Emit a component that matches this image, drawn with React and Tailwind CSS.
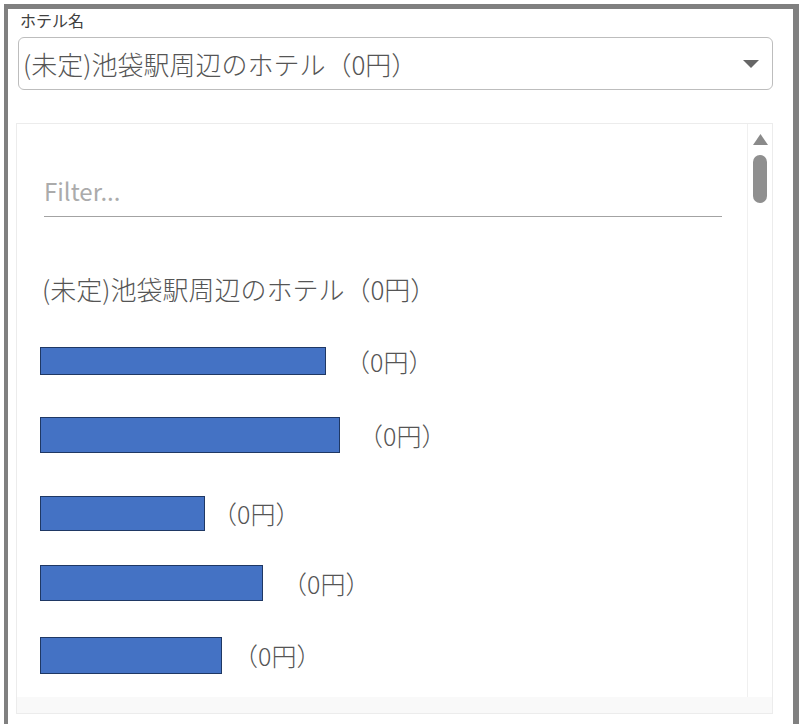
const HOTEL = '(未定)池袋駅周辺のホテル（0円）'

// redacted rows: bar width/height, gap before the price, row height
const ROWS = [
  { bar: 'w-[286px] h-[28px]', gap: 'ml-[19px]', row: 'h-[72px]' },
  { bar: 'w-[300px] h-[36px]', gap: 'ml-[18px]', row: 'h-[76px]' },
  { bar: 'w-[165px] h-[35px]', gap: 'ml-[7px]', row: 'h-[80px]' },
  { bar: 'w-[223px] h-[36px]', gap: 'ml-[19px]', row: 'h-[60px]' },
  { bar: 'w-[182px] h-[37px]', gap: 'ml-[11px]', row: 'h-[84px]' },
]

function SelectBox() {
  return (
    <div className="ml-[10px] mt-[6px] w-[755px] h-[53px] border border-[#bdbdbd] rounded-[6px] flex items-center justify-between pl-[4px] pr-[13px]">
      <span className="text-[26px] leading-none font-light text-[#555555]">{HOTEL}</span>
      <svg width="16" height="8" viewBox="0 0 16 8">
        <path d="M0 0 H16 L8 8 Z" fill="#666666" />
      </svg>
    </div>
  )
}

function Scrollbar() {
  return (
    <div className="w-[25px] border-l border-[#f0f0f0] flex flex-col items-center pt-[10px]">
      <svg width="15" height="11" viewBox="0 0 15 11">
        <path d="M7.5 0 L15 11 H0 Z" fill="#8a8a8a" />
      </svg>
      <div className="mt-[10px] w-[14px] h-[48px] rounded-full bg-[#8f8f8f]" />
    </div>
  )
}

function ListBox() {
  return (
    <div className="ml-[8px] mt-[33px] w-[757px] h-[591px] border border-[#ececec] flex flex-col">
      <div className="flex flex-1">
        <div className="flex-1 pt-[55px]">
          <div className="ml-[27px] w-[678px] pb-[5px] border-b border-[#a3a3a3]">
            <div className="h-[32px] leading-[24px] text-[24px] text-[#ababab]">Filter...</div>
          </div>
          <div className="mt-[36px] pl-[23px]">
            <div className="h-[72px] flex items-center pl-[2px]">
              <span className="text-[26px] leading-none font-light text-[#555555]">{HOTEL}</span>
            </div>
            {ROWS.map((r, i) => (
              <div key={i} className={`${r.row} flex items-center`}>
                <div className={`${r.bar} bg-[#4472c4] border border-[#1f3864]`} />
                <span className={`${r.gap} text-[25px] leading-none font-light text-[#555555]`}>（0円）</span>
              </div>
            ))}
          </div>
        </div>
        <Scrollbar />
      </div>
      <div className="h-[16px] bg-[#f9f9f9]" />
    </div>
  )
}

export default function App() {
  return (
    <div className="bg-white w-[807px] h-[724px] overflow-hidden" style={{ fontFamily: '"Noto Sans CJK JP", "Noto Sans", sans-serif' }}>
      <div className="ml-[4px] mt-[4px] w-[795px] h-[720px] border-l-4 border-t-[5px] border-r-[6px] border-[#808080]">
        <div className="ml-[12px] h-[22px] leading-[22px] text-[16px] text-[#404040]">ホテル名</div>
        <SelectBox />
        <ListBox />
      </div>
    </div>
  )
}
